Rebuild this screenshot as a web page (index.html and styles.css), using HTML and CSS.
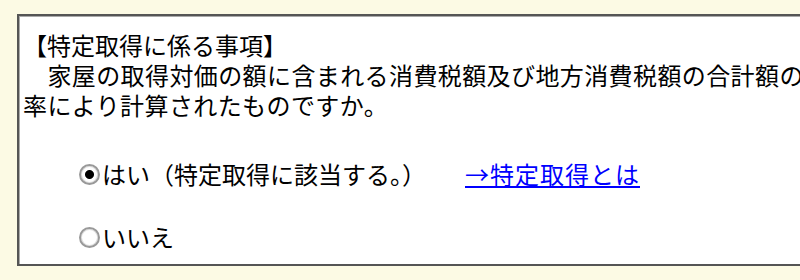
FILE: index.html
```html
<!DOCTYPE html>
<html lang="ja">
<head>
<meta charset="utf-8" />
<title>特定取得に係る事項</title>
<link rel="stylesheet" href="styles.css">
</head>
<body>

<div class="panel">
	<p class="heading">【特定取得に係る事項】</p>
	<p class="question">　家屋の取得対価の額に含まれる消費税額及び地方消費税額の合計額の、８％又は１０％の税<br>率により計算されたものですか。</p>

	<div class="choices">
		<label class="choice">
			<input type="radio" name="tokutei" value="yes" checked>はい（特定取得に該当する。）
			<a href="#" class="help">→特定取得とは</a>
		</label>
		<label class="choice">
			<input type="radio" name="tokutei" value="no">いいえ
		</label>
	</div>
</div>

</body>
</html>
```

FILE: styles.css
```css
html, body {
	overflow: hidden;
}
body {
	margin: 0;
	padding: 14px 0 0 17px;
	background: #fcfae4;
	font: 24px/30px "Noto Sans CJK JP", "DejaVu Sans", sans-serif;
	color: #000;
}

/* --------------------------------- */

.panel {
	width: 1000px;
	height: 252px;
	box-sizing: border-box;
	padding: 14px 0 0 4px;
	background: #fff;
	border: 2px solid #555;
	box-shadow: inset 1px 1px 0 #aaa;
	white-space: nowrap;
}
.panel p {
	margin: 0;
}
.question {
	letter-spacing: 0.4px;
}

/* --------------------------------- */

.choices {
	padding: 39px 0 0 56px;
	display: flex;
	flex-direction: column;
	gap: 33px;
}
.choice {
	display: flex;
	align-items: center;
}
.choice input {
	appearance: none;
	width: 21px;
	height: 21px;
	margin: 0 2px 0 0;
	border: 2px solid #999;
	border-radius: 50%;
	background: #fff;
	box-sizing: border-box;
	box-shadow: inset 0 0 0 1px #ddd;
}
.choice input:checked {
	background: radial-gradient(circle, #000 0 4px, #fff 5px);
}
.help {
	margin-left: 39px;
	color: #0000ff;
	letter-spacing: 1px;
	text-decoration: underline;
	text-underline-offset: 2px;
}
```
